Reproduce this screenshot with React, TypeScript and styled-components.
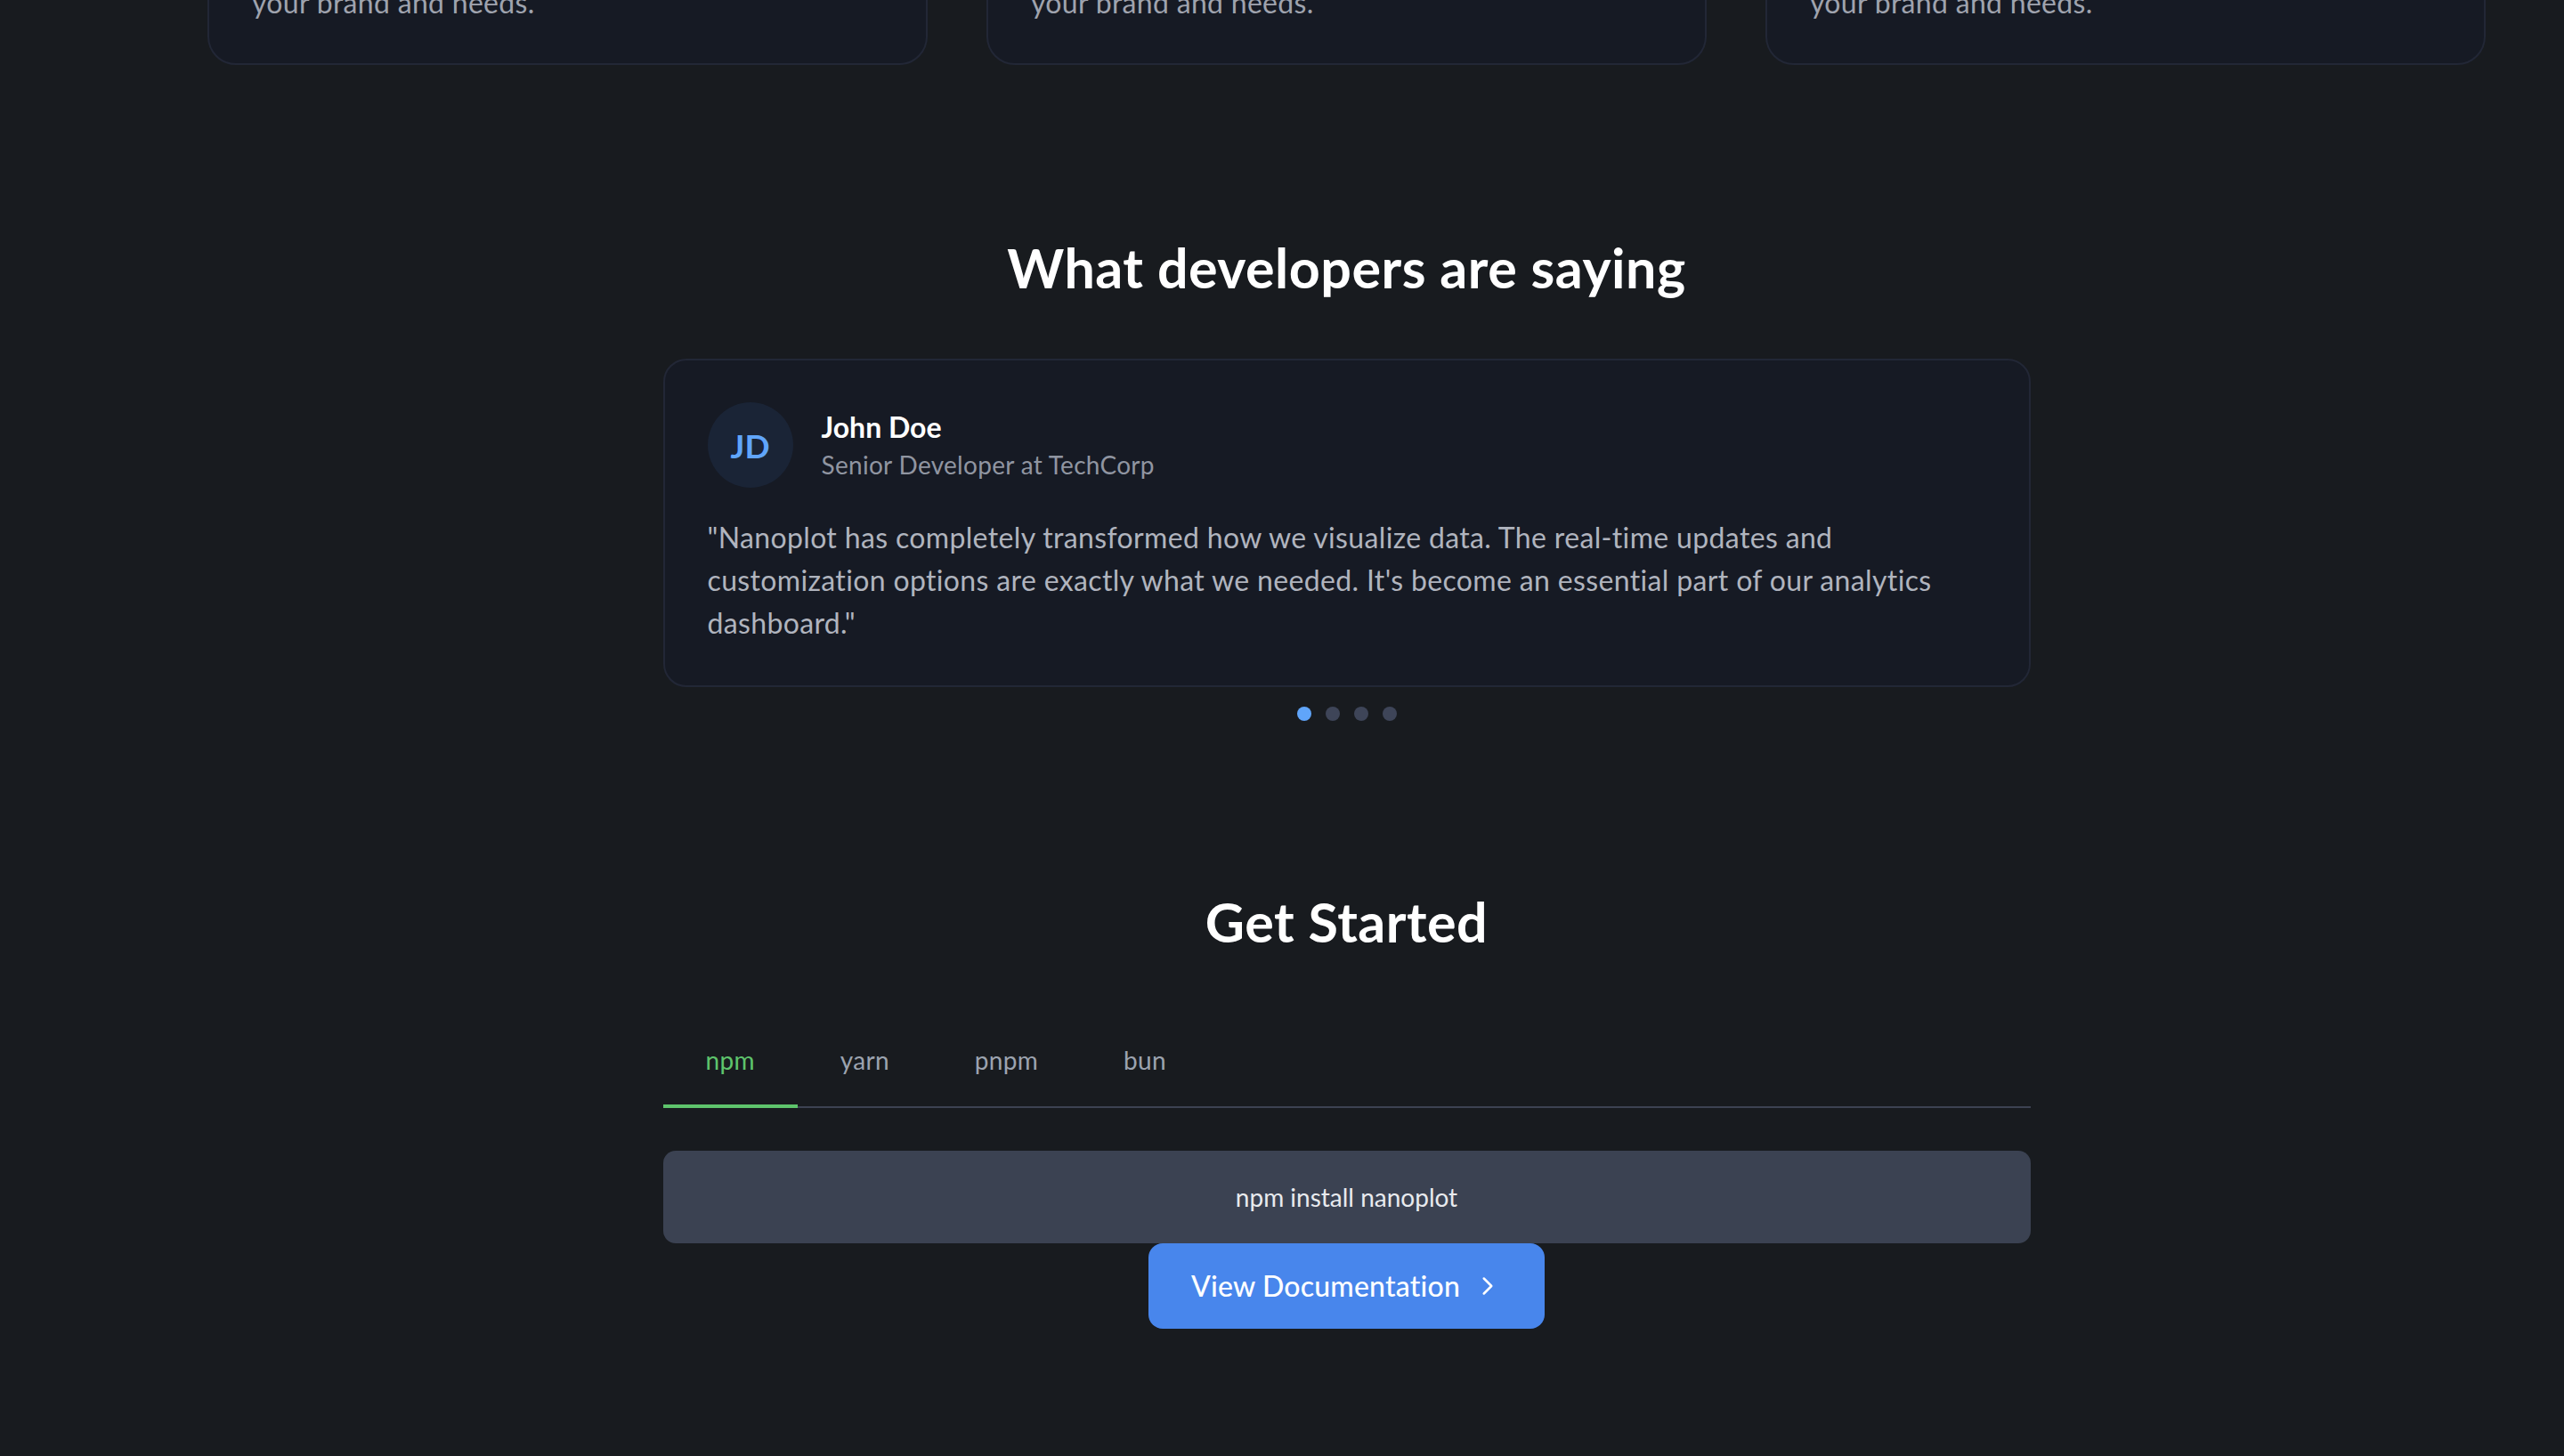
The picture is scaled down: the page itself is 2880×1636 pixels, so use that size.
import React, { FC, useState } from 'react'
import styled, { createGlobalStyle } from 'styled-components'
import { ChevronRight } from 'lucide-react'

const GlobalStyle = createGlobalStyle`
  html, body {
    margin: 0;
    padding: 0;
    background: #181b1f;
  }
  body {
    font-family: Lato, "Noto Sans", sans-serif;
    -webkit-font-smoothing: antialiased;
  }
  #root {
    min-height: 100vh;
  }
`

const FEATURES = [
  { title: 'Customizable', text: 'Tweak colors and layouts to fit' },
  { title: 'Themeable', text: 'Light, dark or your own palette for' },
  { title: 'Composable', text: 'Mix and match components for' },
]

const TESTIMONIALS = [
  {
    initials: 'JD',
    name: 'John Doe',
    role: 'Senior Developer at TechCorp',
    quote:
      '"Nanoplot has completely transformed how we visualize data. The real-time updates and customization options are exactly what we needed. It\'s become an essential part of our analytics dashboard."',
  },
  { initials: 'AS', name: 'Alice Smith', role: 'Data Engineer at DataFlow', quote: '"Fast, small and easy to theme."' },
  { initials: 'MK', name: 'Mark Kim', role: 'Frontend Lead at Pixel', quote: '"The API is a joy to use."' },
  { initials: 'RL', name: 'Rita Lopez', role: 'CTO at Chartly', quote: '"Our dashboards have never looked better."' },
]

const MANAGERS = [
  { id: 'npm', command: 'npm install nanoplot' },
  { id: 'yarn', command: 'yarn add nanoplot' },
  { id: 'pnpm', command: 'pnpm add nanoplot' },
  { id: 'bun', command: 'bun add nanoplot' },
]

const App: FC = () => {
  const [slide, setSlide] = useState(0)
  const [manager, setManager] = useState('npm')
  const testimonial = TESTIMONIALS[slide]
  const command = MANAGERS.find((m) => m.id === manager)?.command

  return (
    <>
      <GlobalStyle />
      <StyledPage>
        <StyledSidebar />
        <StyledMain>
          <StyledFeatureViewport>
            <StyledFeatureGrid>
              {FEATURES.map((feature) => (
                <StyledFeatureCard key={feature.title}>
                  <StyledFeatureTitle>{feature.title}</StyledFeatureTitle>
                  <StyledFeatureText>
                    {feature.text}
                    <br />
                    your brand and needs.
                  </StyledFeatureText>
                </StyledFeatureCard>
              ))}
            </StyledFeatureGrid>
          </StyledFeatureViewport>

          <StyledSection gap={192}>
            <StyledHeading spacing={66}>What developers are saying</StyledHeading>
            <StyledTestimonialCard>
              <StyledAuthor>
                <StyledAvatar>{testimonial.initials}</StyledAvatar>
                <div>
                  <StyledAuthorName>{testimonial.name}</StyledAuthorName>
                  <StyledAuthorRole>{testimonial.role}</StyledAuthorRole>
                </div>
              </StyledAuthor>
              <StyledQuote>{testimonial.quote}</StyledQuote>
            </StyledTestimonialCard>
            <StyledDots>
              {TESTIMONIALS.map((t, i) => (
                <StyledDot key={t.name} active={i === slide} onClick={() => setSlide(i)} />
              ))}
            </StyledDots>
          </StyledSection>

          <StyledSection gap={190}>
            <StyledHeading spacing={63}>Get Started</StyledHeading>
            <StyledInstall>
              <StyledTabList>
                {MANAGERS.map((m) => (
                  <StyledTab key={m.id} active={m.id === manager} onClick={() => setManager(m.id)}>
                    {m.id}
                  </StyledTab>
                ))}
              </StyledTabList>
              <StyledCommand>{command}</StyledCommand>
              <StyledDocButton>
                View Documentation
                <ChevronRight size={34} strokeWidth={1.8} />
              </StyledDocButton>
            </StyledInstall>
          </StyledSection>
        </StyledMain>
      </StyledPage>
    </>
  )
}

export default App

const StyledPage = styled.div`
  display: flex;
  min-height: 100vh;
  background: #181b1f;
`

const StyledSidebar = styled.aside`
  flex: 0 0 144px;
`

const StyledMain = styled.main`
  flex: 1;
  min-width: 0;
  padding: 0 88px 120px 89px;
  display: flex;
  flex-direction: column;
`

// the page is scrolled: only the bottom of the feature cards is in view
const StyledFeatureViewport = styled.div`
  height: 73px;
  overflow: hidden;
  display: flex;
  flex-direction: column;
  justify-content: flex-end;
`

const StyledFeatureGrid = styled.div`
  display: grid;
  grid-template-columns: repeat(3, 1fr);
  gap: 66px;
`

const StyledFeatureCard = styled.div`
  display: flex;
  flex-direction: column;
  justify-content: flex-end;
  background: #161a24;
  border: 2px solid #222736;
  border-radius: 32px;
  padding: 48px 48px 44px;
`

const StyledFeatureTitle = styled.h3`
  margin: 0 0 16px;
  color: #fff;
  font-size: 40px;
  font-weight: 700;
`

const StyledFeatureText = styled.p`
  margin: 0;
  color: #9fa3ae;
  font-size: 32px;
  line-height: 48px;
  letter-spacing: 0.3px;
`

const StyledSection = styled.section<{ gap: number }>`
  margin-top: ${({ gap }) => gap}px;
  display: flex;
  flex-direction: column;
  align-items: center;
`

const StyledHeading = styled.h2<{ spacing: number }>`
  margin: 0 0 ${({ spacing }) => spacing}px;
  color: #fff;
  font-size: 61px;
  line-height: 72px;
  font-weight: 700;
  letter-spacing: 0.5px;
  text-align: center;
`

const StyledTestimonialCard = styled.div`
  box-sizing: border-box;
  width: 1536px;
  background: #161a24;
  border: 2px solid #222736;
  border-radius: 26px;
  padding: 47px 48px 46px 48px;
`

const StyledAuthor = styled.div`
  display: flex;
  align-items: center;
  gap: 32px;
  margin-bottom: 32px;
`

const StyledAvatar = styled.div`
  width: 96px;
  height: 96px;
  border-radius: 50%;
  background: #1a2436;
  color: #60a5fa;
  font-size: 37px;
  font-weight: 700;
  display: flex;
  align-items: center;
  justify-content: center;
`

const StyledAuthorName = styled.div`
  color: #fff;
  font-size: 32px;
  line-height: 44px;
  font-weight: 700;
`

const StyledAuthorRole = styled.div`
  color: #9095a1;
  font-size: 28px;
  line-height: 40px;
  letter-spacing: 0.3px;
`

const StyledQuote = styled.p`
  margin: 0;
  color: #b0b4be;
  font-size: 32px;
  line-height: 48px;
  letter-spacing: 0.35px;
`

const StyledDots = styled.div`
  display: flex;
  gap: 16px;
  margin-top: 22px;
`

const StyledDot = styled.button<{ active: boolean }>`
  width: 16px;
  height: 16px;
  padding: 0;
  border: none;
  border-radius: 50%;
  cursor: pointer;
  background: ${({ active }) => (active ? '#60a5fa' : '#3e4558')};
`

const StyledInstall = styled.div`
  width: 1536px;
  display: flex;
  flex-direction: column;
  align-items: center;
`

const StyledTabList = styled.div`
  align-self: stretch;
  display: flex;
  border-bottom: 2px solid #3c4252;
  margin-bottom: 48px;
`

const StyledTab = styled.button<{ active: boolean }>`
  margin-bottom: -2px;
  padding: 36px 48px 30px;
  background: none;
  border: none;
  border-bottom: 4px solid ${({ active }) => (active ? '#5ec46c' : 'transparent')};
  color: ${({ active }) => (active ? '#5ec46c' : '#9ca3af')};
  font-family: inherit;
  font-size: 28px;
  line-height: 40px;
  letter-spacing: 0.3px;
  cursor: pointer;
`

const StyledCommand = styled.div`
  align-self: stretch;
  background: #3b4252;
  border-radius: 14px;
  padding: 32px;
  color: #e8eaee;
  font-size: 28px;
  line-height: 40px;
  text-align: center;
`

const StyledDocButton = styled.button`
  display: flex;
  align-items: center;
  gap: 14px;
  padding: 24px 47px 24px 48px;
  background: #4886ec;
  border: none;
  border-radius: 16px;
  color: #fff;
  font-family: inherit;
  font-size: 32px;
  line-height: 48px;
  font-weight: 500;
  letter-spacing: 0.2px;
  cursor: pointer;
`
